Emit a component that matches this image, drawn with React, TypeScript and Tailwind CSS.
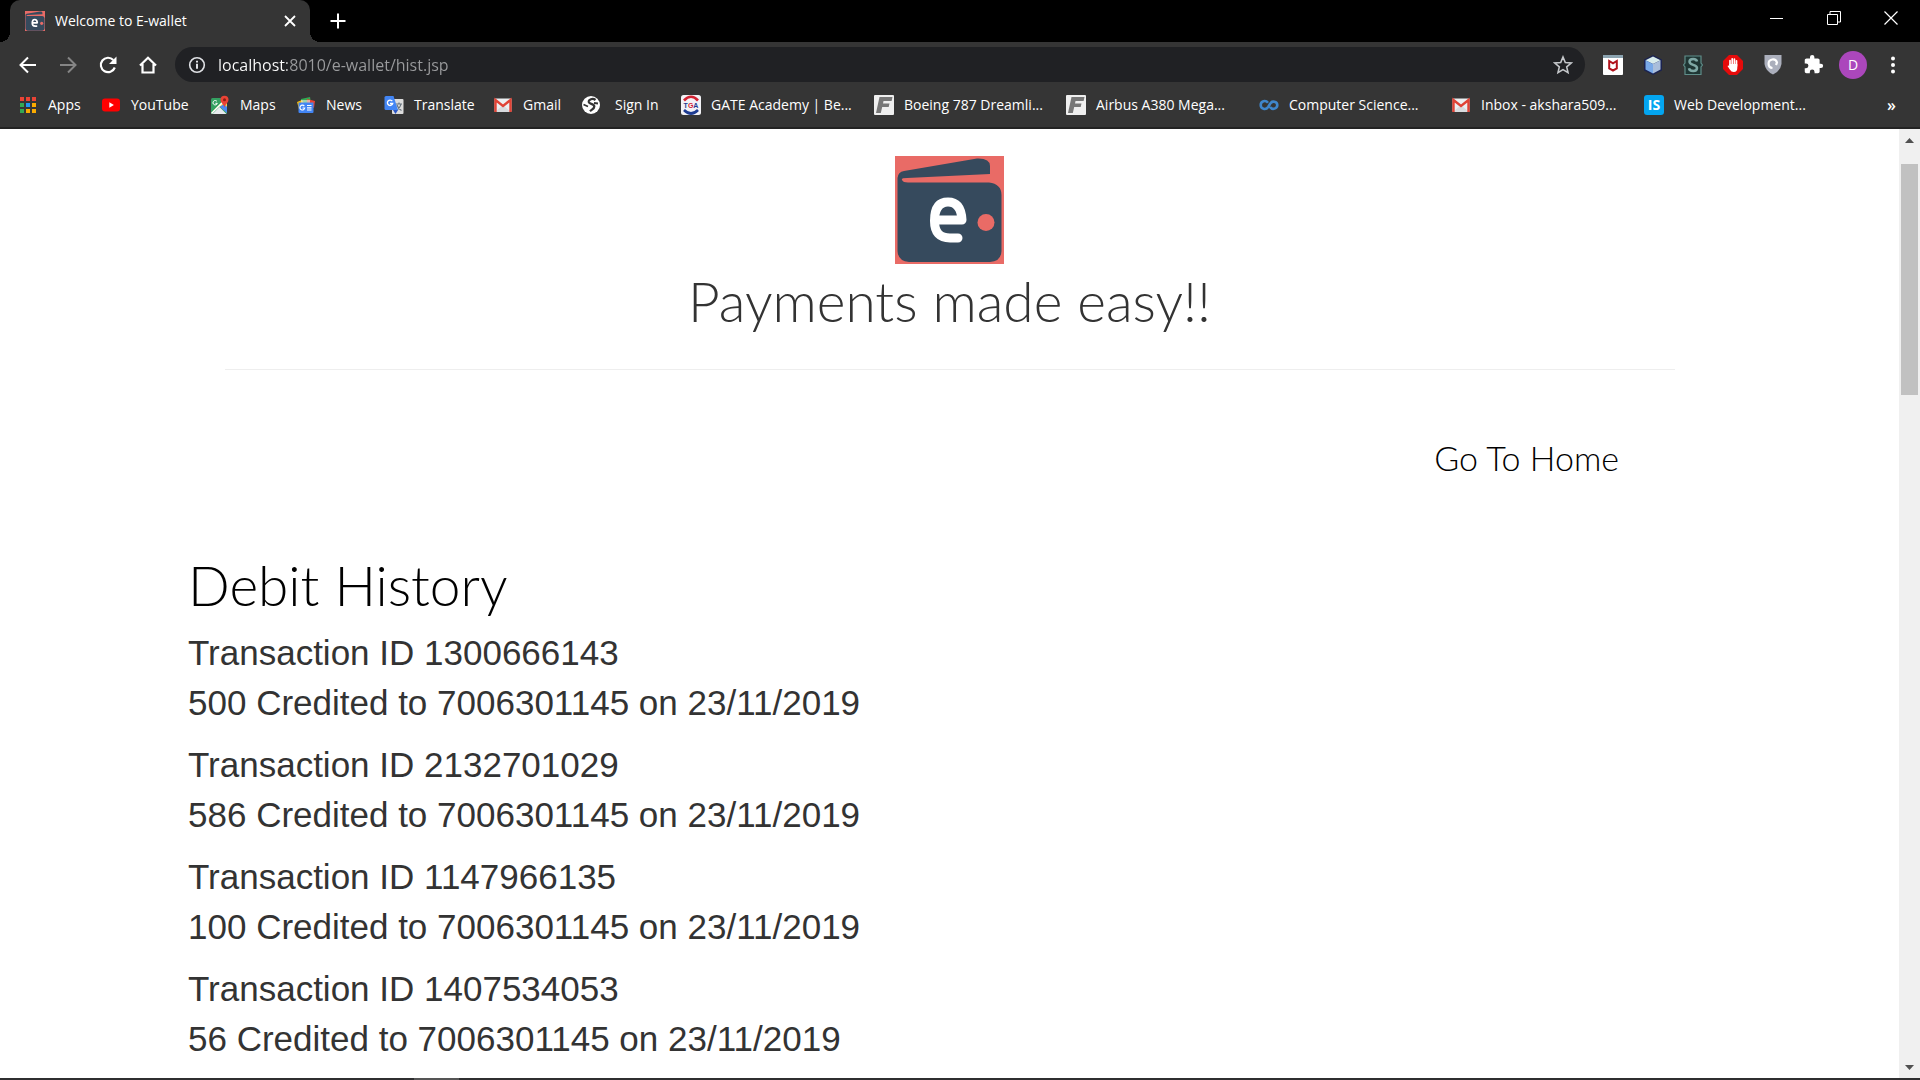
import type { ReactNode } from "react";

const hand = "font-['Ink_Free','Lato',cursive] font-light";

function WalletLogo({ className }: { className: string }) {
  return (
    <svg viewBox="0 0 109 108" preserveAspectRatio="none" className={className} role="img" aria-label="E-wallet">
      <rect width="109" height="108" fill="#e96b66" />
      <path d="M2.500 22 Q3 16 9 15 L82 2.500 Q95 2 95 10 V18 L12 22 Q6 22 7 24 Q8 26.500 13 26.500 H94 Q106.500 28 106.500 39 V95 Q106 105.500 95 106 H14 Q3 105 2.500 95 Z" fill="#364a5d" />
      <path d="M39.500 64 H67 Q66 46 53 46 Q39.500 46 39.500 65 Q39.500 82 55 82 H63" fill="none" stroke="#fff" strokeWidth="9" strokeLinecap="round" strokeLinejoin="round" />
      <circle cx="91" cy="66.500" r="8.500" fill="#e96b66" />
    </svg>
  );
}

function Svg({ children, size = "size-5", box = "0 0 20 20" }: { children: ReactNode; size?: string; box?: string }) {
  return (
    <svg viewBox={box} className={`${size} shrink-0`} fill="none" aria-hidden="true">
      {children}
    </svg>
  );
}

const appColors = ["#ea4335", "#ea4335", "#ea4335", "#34a853", "#2196f3", "#fbab00", "#34a853", "#fbab00", "#fbab00"];

const AppsIcon = (
  <Svg>
    {appColors.map((c, i) => (
      <rect key={i} x={2 + (i % 3) * 6} y={2 + Math.floor(i / 3) * 6} width="4" height="4" fill={c} />
    ))}
  </Svg>
);
const YouTubeIcon = (
  <Svg>
    <rect x="1" y="3.500" width="18" height="13" rx="3" fill="#f00" />
    <path d="M8.300 7.300v5.400l4.600-2.700z" fill="#fff" />
  </Svg>
);
const MapsIcon = (
  <Svg>
    <rect x="1" y="3" width="16" height="16" rx="1.500" fill="#34a061" />
    <path d="M1 18 15 4l2 2v11.500L10 11z" fill="#f4d04c" />
    <path d="M2.500 19 9.500 12 16.500 19z" fill="#e8eaed" />
    <path d="M9.800 11.800 17 18V12l-3-3z" fill="#4a89f3" />
    <path d="M1.500 18.500 14 6" stroke="#fff" strokeWidth="1.600" />
    <path d="M7 6.500a2.200 2.200 0 1 0 .3 1.800H5.400" stroke="#fff" strokeWidth="1" />
    <path d="M14.500 0.800a4 4 0 0 0-4 4c0 3.200 3.200 3.800 4 8 .8-4.200 4-4.800 4-8a4 4 0 0 0-4-4z" fill="#ea4335" />
    <circle cx="14.500" cy="4.700" r="1.500" fill="#8c1d14" />
  </Svg>
);
const NewsIcon = (
  <Svg>
    <path d="m5 4 9-2 1 6H5z" fill="#34a853" />
    <path d="m1 7 5-2 3 5-6 4z" fill="#fbbc04" />
    <path d="m11 4 8 2-1 7-7-3z" fill="#ea4335" />
    <path d="M5 5h9v4H5z" fill="#eaf3ea" opacity=".6" />
    <path d="M2.500 7.500h15V17q0 1-1 1h-13q-1 0-1-1z" fill="#4285f4" />
    <path d="M8.300 11.200a2.400 2.400 0 1 0 .4 1.800H6.500M11 10.500h4.500M11 12.800h4.500M11 15h4.500" stroke="#fff" strokeWidth="1.200" />
  </Svg>
);
const TranslateIcon = (
  <Svg>
    <rect x="8" y="4" width="11.500" height="15" rx="1" fill="#dcdcdc" />
    <path d="M12 9h6M15 7.500V9M17 9c-.5 3-2.500 5-4.500 6.500M13 10c1 3 2.500 4.500 4.500 5.500" stroke="#66727c" strokeWidth="1.100" />
    <path d="M2 1h7.500L14 15H2q-1.500 0-1.500-1.500v-11Q.5 1 2 1z" fill="#4285f4" />
    <path d="m9 15 5 0-2.500 4z" fill="#2a56c6" />
    <path d="M8.300 6.200a2.700 2.700 0 1 0 .4 2.300H6" stroke="#fff" strokeWidth="1.300" />
  </Svg>
);
const GmailIcon = (
  <Svg>
    <rect x="1.500" y="3.500" width="17" height="13.500" rx="1" fill="#eceff1" />
    <path d="m2 17 8-7 8 7z" fill="#d8dbde" />
    <path d="M2.500 17V5l7.500 6 7.500-6v12" stroke="#e04336" strokeWidth="2.400" />
  </Svg>
);
const GlobeIcon = (
  <Svg>
    <circle cx="10" cy="10" r="9" fill="#fff" />
    <path d="M14.500 5C11.500 2.800 7.500 4.500 7.800 7c.4 2.200 5.400 1.500 5.500 4.500 0 2.300-2.300 2.800-4.300 4.800" stroke="#343434" strokeWidth="2.300" />
    <path d="M2.500 9.500 7 11.500M13 8l4 .5" stroke="#343434" strokeWidth="1.800" />
  </Svg>
);
const GateIcon = (
  <Svg>
    <rect width="20" height="20" rx="2.500" fill="#f2f2f6" />
    <path d="M3 5.500Q10-2 17 5.500" stroke="#d22232" strokeWidth="2.600" />
    <path d="M3 15Q10 22 17 15" stroke="#1d3b91" strokeWidth="2.600" />
    <text x="10" y="12.700" textAnchor="middle" fontFamily="Liberation Sans" fontWeight="700" fontSize="7" fill="#1d3b91">T<tspan fill="#d22232">G</tspan>A</text>
  </Svg>
);
const FIcon = (
  <Svg>
    <rect width="20" height="20" rx="1" fill="#efefef" />
    <path d="M5.500 2H18.500L17.600 6H9.500L9 8.500H15.500L14.700 12H8.200L6.800 18H2z" fill="#777" />
  </Svg>
);
const InfinityIcon = (
  <Svg>
    <path d="M9 7.800C6.500 4.500 1.700 6 1.700 10s5 5.500 7.500 2L11 9c2-4 7.300-2.500 7.300 1s-4.800 5.500-7.300 2" stroke="#3f86cc" strokeWidth="2.600" />
  </Svg>
);
const ISIcon = (
  <Svg>
    <rect width="20" height="20" rx="3" fill="#03a5f0" />
    <text x="10" y="15" textAnchor="middle" fontFamily="Open Sans" fontWeight="700" fontSize="14" fill="#fff">IS</text>
  </Svg>
);

const bookmarks: { label: string; icon: ReactNode; width: string }[] = [
  { label: "Apps", icon: AppsIcon, width: "w-[83px] gap-[10px]" },
  { label: "YouTube", icon: YouTubeIcon, width: "w-[109px] gap-[10px]" },
  { label: "Maps", icon: MapsIcon, width: "w-[86px] gap-[10px]" },
  { label: "News", icon: NewsIcon, width: "w-[88px] gap-[10px]" },
  { label: "Translate", icon: TranslateIcon, width: "w-[109px] gap-[10px]" },
  { label: "Gmail", icon: GmailIcon, width: "w-[88px] gap-[10px]" },
  { label: "Sign In", icon: GlobeIcon, width: "w-[100px] gap-[14px]" },
  { label: "GATE Academy | Be...", icon: GateIcon, width: "w-[193px] gap-[10px]" },
  { label: "Boeing 787 Dreamli...", icon: FIcon, width: "w-[192px] gap-[10px]" },
  { label: "Airbus A380 Mega...", icon: FIcon, width: "w-[193px] gap-[10px]" },
  { label: "Computer Science...", icon: InfinityIcon, width: "w-[192px] gap-[10px]" },
  { label: "Inbox - akshara509...", icon: GmailIcon, width: "w-[193px] gap-[10px]" },
  { label: "Web Development...", icon: ISIcon, width: "w-[193px] gap-[10px]" },
];

const extensions: { label: string; icon: ReactNode }[] = [
  {
    label: "McAfee WebAdvisor",
    icon: (
      <Svg>
        <rect width="20" height="20" rx="1" fill="#fff" />
        <path d="M0 0h20v3H0z" fill="#8ba3b0" />
        <path d="M6.200 6v7.500l3.800 2 3.800-2V6L10 8.300z" stroke="#b1121b" strokeWidth="2" />
      </Svg>
    ),
  },
  {
    label: "Cube",
    icon: (
      <Svg>
        <path d="M10 0 19 4.500v11L10 20 1 15.500v-11z" fill="#1b2350" />
        <path d="m10 1.500 7.500 3.700L10 9 2.500 5.200z" fill="#d8ecec" />
        <path d="M2.500 5.200 10 9v9.500l-7.500-4z" fill="#78a9e8" />
        <path d="M17.500 5.200 10 9v9.500l7.500-4z" fill="#a9bedb" />
      </Svg>
    ),
  },
  {
    label: "Stylus",
    icon: (
      <Svg>
        <path d="M2 1h16v7l1.500 2-1.500 2v7.500H2V12L.5 10 2 8z" fill="#1f3634" stroke="#5f8d89" strokeWidth="1.200" />
        <path d="M14 6.500C13.500 3 6.500 3 6.500 6.700c0 4 7.500 2.300 7.500 6.300 0 4-7.500 3.800-8 .3" stroke="#7fa8a5" strokeWidth="2.500" />
      </Svg>
    ),
  },
  {
    label: "AdBlock",
    icon: (
      <Svg>
        <path d="M6 0h8l6 6v8l-6 6H6l-6-6V6z" fill="#e60b0b" />
        <path d="M7 11V5.500M9.200 10V3.800M11.400 10V4M13.500 11V5.800" stroke="#fff" strokeWidth="1.700" strokeLinecap="round" />
        <path d="M6.200 9h8.100v4q0 4-3.500 4-2.500 0-4-2.500L4.500 11q1-1.300 2.200.5z" fill="#fff" />
      </Svg>
    ),
  },
  {
    label: "Shield",
    icon: (
      <Svg>
        <path d="M1.500 0h17v9q-1 7-8.500 10.500Q2.500 16 1.500 9z" fill="#abafbc" />
        <path d="M9.500 13A4.300 4.300 0 1 1 14 7.500L13 10" stroke="#fff" strokeWidth="2.200" />
      </Svg>
    ),
  },
  {
    label: "Extensions",
    icon: (
      <Svg size="size-[21px]" box="0 0 24 24">
        <path
          fill="#fff"
          d="M20.500 11H19V7c0-1.100-.9-2-2-2h-4V3.500a2.500 2.500 0 0 0-5 0V5H4c-1.100 0-2 .9-2 2v3.800h1.500a2.700 2.700 0 0 1 0 5.400H2V20c0 1.100.9 2 2 2h3.800v-1.500a2.700 2.700 0 0 1 5.400 0V22H17c1.100 0 2-.9 2-2v-4h1.500a2.500 2.500 0 0 0 0-5z"
        />
      </Svg>
    ),
  },
];

const transactions = [
  { id: "1300666143", amount: 500 },
  { id: "2132701029", amount: 586 },
  { id: "1147966135", amount: 100 },
  { id: "1407534053", amount: 56 },
];

function TabStrip() {
  return (
    <div className="flex h-[42px] shrink-0 items-stretch bg-black">
      <div className="relative ml-[10px] flex w-[300px] items-center rounded-t-[10px] bg-[#353535] pr-3 pl-[15px]">
        <span className="absolute bottom-0 -left-[10px] size-[10px] bg-[radial-gradient(circle_at_0_0,#000_10px,#353535_10px)]" />
        <span className="absolute -right-[10px] bottom-0 size-[10px] bg-[radial-gradient(circle_at_100%_0,#000_10px,#353535_10px)]" />
        <WalletLogo className="size-5 shrink-0" />
        <span className="ml-[10px] flex-1 pb-0.5 text-[14px] text-white">Welcome to E-wallet</span>
        <button aria-label="Close tab" className="flex size-4 items-center justify-center">
          <Svg size="size-3" box="0 0 12 12">
            <path d="m1 1 10 10M11 1 1 11" stroke="#fff" strokeWidth="1.800" />
          </Svg>
        </button>
      </div>
      <button aria-label="New tab" className="ml-[18px] flex w-5 items-center justify-center">
        <Svg size="size-4" box="0 0 16 16">
          <path d="M8 0.500v15M0.500 8h15" stroke="#fff" strokeWidth="2" />
        </Svg>
      </button>
      <div className="mr-px ml-auto flex h-9 items-center">
        <button aria-label="Minimize" className="flex w-[57px] justify-center">
          <span className="h-px w-[13px] bg-white" />
        </button>
        <button aria-label="Restore" className="flex w-[57px] justify-center">
          <Svg size="size-[14px]" box="0 0 14 14">
            <path d="M.5 3.500h10v10H.5zM3 3.500v-3h10.500V11h-3" stroke="#fff" />
          </Svg>
        </button>
        <button aria-label="Close window" className="flex w-[57px] justify-center">
          <Svg size="size-[14px]" box="0 0 14 14">
            <path d="m.5.5 13 13M13.500.5l-13 13" stroke="#fff" strokeWidth="1.200" />
          </Svg>
        </button>
      </div>
    </div>
  );
}

function Toolbar() {
  return (
    <div className="flex h-[46px] shrink-0 items-center bg-[#353535] pr-[7px] pb-px pl-2">
      <button aria-label="Back" className="flex w-10 justify-center">
        <Svg>
          <path d="M18 10H3M10 2.500 2.500 10l7.500 7.500" stroke="#fff" strokeWidth="2" />
        </Svg>
      </button>
      <button aria-label="Forward" className="flex w-10 justify-center">
        <Svg>
          <path d="M2 10h15M10 2.500l7.500 7.500-7.500 7.500" stroke="#858585" strokeWidth="2" />
        </Svg>
      </button>
      <button aria-label="Reload" className="flex w-10 justify-center">
        <Svg>
          <path d="M16.800 12.500A7.200 7.200 0 1 1 15.300 5" stroke="#fff" strokeWidth="2.200" />
          <path d="M18.500 1.500V9H11z" fill="#fff" />
        </Svg>
      </button>
      <button aria-label="Home" className="flex w-10 justify-center">
        <Svg>
          <path d="M2 10.500 10 2.700l8 7.800M4.500 9v8.500h11V9" stroke="#fff" strokeWidth="2.200" />
        </Svg>
      </button>
      <div className="ml-[7px] flex h-[35px] flex-1 items-center rounded-full bg-[#202124] pr-3 pl-3">
        <Svg>
          <circle cx="10" cy="10" r="7.300" stroke="#dfe1e5" strokeWidth="1.600" />
          <path d="M10 8.700v5M10 5.700v1.800" stroke="#dfe1e5" strokeWidth="2" />
        </Svg>
        <input
          aria-label="Address"
          defaultValue="localhost:8010/e-wallet/hist.jsp"
          className="ml-[11px] flex-1 bg-[linear-gradient(90deg,#fff_69px,#9a9b9d_69px)] bg-clip-text text-[16px] text-transparent caret-white outline-none"
        />
        <button aria-label="Bookmark this page">
          <Svg>
            <path d="m10 2 2.300 5.500 5.900.5-4.500 3.900L15 17.600l-5-3-5 3 1.300-5.700L1.800 8l5.900-.5z" stroke="#c4c7ca" strokeWidth="1.600" />
          </Svg>
        </button>
      </div>
      <div className="ml-2 flex items-center">
        {extensions.map((e) => (
          <button key={e.label} aria-label={e.label} className="flex w-10 justify-center">
            {e.icon}
          </button>
        ))}
        <button aria-label="Profile" className="flex w-10 justify-center">
          <span className="flex size-7 items-center justify-center rounded-full bg-[#ab47bc] text-[14px] text-white">D</span>
        </button>
        <button aria-label="Menu" className="flex w-10 justify-center">
          <Svg>
            <circle cx="10" cy="3.500" r="2" fill="#fff" />
            <circle cx="10" cy="10" r="2" fill="#fff" />
            <circle cx="10" cy="16.500" r="2" fill="#fff" />
          </Svg>
        </button>
      </div>
    </div>
  );
}

function BookmarkBar() {
  return (
    <nav aria-label="Bookmarks" className="flex h-[41px] shrink-0 items-center border-b-2 border-[#232323] bg-[#353535] pr-6 pb-[6px] pl-[18px]">
      {bookmarks.map((b) => (
        <a key={b.label} href="#" className={`flex shrink-0 items-center whitespace-nowrap text-[14px] text-white ${b.width}`}>
          {b.icon}
          {b.label}
        </a>
      ))}
      <button aria-label="More bookmarks" className="ml-auto text-[16px] leading-5 font-semibold text-white">
        »
      </button>
    </nav>
  );
}

function ScrollBar() {
  return (
    <div className="flex w-[21px] shrink-0 flex-col items-center bg-[#f0f0f0]">
      <div className="flex h-[35px] items-start pt-[9px]">
        <Svg size="h-[5px] w-[9px]" box="0 0 9 5">
          <path d="M0 5 4.500 0 9 5z" fill="#505050" />
        </Svg>
      </div>
      <div className="h-[231px] w-[17px] bg-[#c1c1c1]" />
      <div className="mt-auto pb-2">
        <Svg size="h-[5px] w-[9px]" box="0 0 9 5">
          <path d="M0 0h9L4.500 5z" fill="#505050" />
        </Svg>
      </div>
    </div>
  );
}

export default function App() {
  return (
    <div className="flex h-screen flex-col overflow-hidden bg-white font-['Open_Sans',sans-serif]">
      <TabStrip />
      <Toolbar />
      <BookmarkBar />
      <div className="flex min-h-0 flex-1">
        <main className="min-w-0 flex-1 overflow-hidden">
          <header className="mx-auto flex max-w-[1450px] flex-col items-center border-b border-[#eee] pt-[27px] pb-9">
            <WalletLogo className="h-[108px] w-[109px]" />
            <h1 className={`${hand} mt-[5px] text-[55px] leading-[64px] text-[#333]`}>Payments made easy!!</h1>
          </header>
          <div className="mt-[64px] flex justify-end pr-[280px]">
            <a href="#" className={`${hand} text-[34px] leading-[48px] text-black`}>
              Go To Home
            </a>
          </div>
          <section className="mt-[67px] pl-[188px]">
            <h2 className={`${hand} text-[55px] leading-[72px] text-black`}>Debit History</h2>
            <ul className="mt-[7px] flex flex-col gap-3 font-['Liberation_Sans',Arial,sans-serif] text-[35px] leading-[50px] text-[#333]">
              {transactions.map((t) => (
                <li key={t.id}>
                  <p>Transaction ID {t.id}</p>
                  <p>{t.amount} Credited to 7006301145 on 23/11/2019</p>
                </li>
              ))}
            </ul>
          </section>
        </main>
        <ScrollBar />
      </div>
      <div className="h-[2px] shrink-0 bg-[#2f2f30] pl-[414px]">
        <div className="h-[2px] w-[45px] bg-[#555]" />
      </div>
    </div>
  );
}
